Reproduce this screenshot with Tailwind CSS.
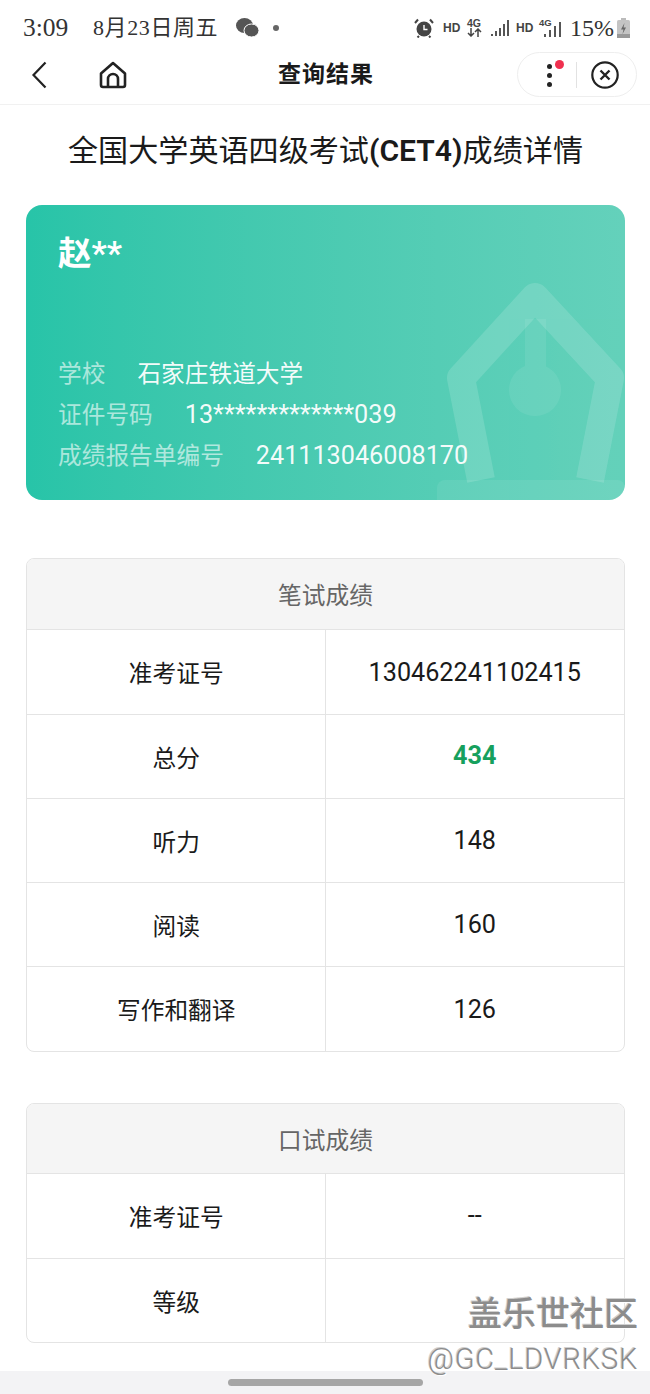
<!DOCTYPE html>
<html lang="zh-CN">
<head>
    <meta charset="UTF-8">
    <meta name="viewport" content="width=device-width, initial-scale=1.0">
    <title>查询结果</title>
    <script src="https://cdn.jsdelivr.net/npm/@tailwindcss/browser@4"></script>
</head>
<body class="bg-white text-[#1a1a1a] font-['Roboto','Noto_Sans_CJK_SC',sans-serif]">
<div class="relative w-[650px] h-[1394px] overflow-hidden flex flex-col">

    <!-- status bar -->
    <div class="h-[52px] shrink-0 flex items-center pl-[23px] pt-[3px] text-[#333] font-['Liberation_Serif','Noto_Sans_CJK_SC',serif]">
        <span class="w-[70px] text-[25.5px] leading-none">3:09</span>
        <span class="w-[143px] text-[22px] leading-none whitespace-nowrap tracking-[0.6px]">8月23日周五</span>
        <svg class="w-[23px] h-[20px]" viewBox="0 0 23 20" fill="#555">
            <ellipse cx="8.5" cy="7.5" rx="8.5" ry="7.5"/>
            <ellipse cx="15.5" cy="12.5" rx="7.5" ry="6.5" stroke="#fff" stroke-width="1"/>
        </svg>
        <span class="ml-[14px] w-[6px] h-[6px] rounded-full bg-[#666]"></span>
        <svg class="ml-[135px] w-[20px] h-[20px]" viewBox="0 0 20 20">
            <circle cx="10" cy="11" r="7.5" fill="#444"/>
            <path d="M10 7v4.5h3.5" stroke="#fff" stroke-width="1.4" fill="none"/>
            <path d="M1 5l3-3.5M19 5l-3-3.5M5 18l-1.5 1.5M15 18l1.5 1.5" stroke="#444" stroke-width="2"/>
        </svg>
        <span class="ml-[9px] w-[24px] text-[12px] font-bold font-['Liberation_Sans'] text-[#444]">HD</span>
        <div class="w-[24px] flex flex-col items-start leading-none font-['Liberation_Sans'] text-[#444] font-bold text-[10.5px]">
            <span>4G</span>
            <svg class="w-[15px] h-[9px]" viewBox="0 0 15 9" fill="none" stroke="#444" stroke-width="1.5">
                <path d="M4 0v8M1 5l3 3 3-3M11 9V1M8 4l3-3 3 3"/>
            </svg>
        </div>
        <svg class="w-[18px] h-[16px]" viewBox="0 0 18 16" fill="#555">
            <rect x="0" y="14" width="2" height="2"/><rect x="4" y="11" width="2" height="5"/><rect x="8" y="8" width="2" height="8"/><rect x="12" y="4" width="2" height="12"/><rect x="16" y="0" width="2" height="16"/>
        </svg>
        <span class="ml-[7px] w-[23px] text-[12px] font-bold font-['Liberation_Sans'] text-[#444]">HD</span>
        <div class="relative w-[24px] h-[20px]">
            <span class="absolute left-0 top-0 text-[9.5px] leading-none font-bold font-['Liberation_Sans'] text-[#444]">4G</span>
            <svg class="absolute left-[5px] top-[3px] w-[18px] h-[16px]" viewBox="0 0 18 16" fill="#555">
                <rect x="0" y="13" width="2" height="3"/><rect x="5" y="9" width="2" height="7"/><rect x="10" y="5" width="2" height="11"/><rect x="15" y="1" width="2" height="15"/>
            </svg>
        </div>
        <span class="ml-[7px] w-[47px] text-[24px] leading-none whitespace-nowrap">15%</span>
        <svg class="w-[13px] h-[20px]" viewBox="0 0 13 20">
            <rect x="4" y="0" width="5" height="2" fill="#bbb"/>
            <rect x="0" y="2" width="13" height="18" rx="1.5" fill="#c4c4c4"/>
            <rect x="0" y="16" width="13" height="4" fill="#999"/>
            <path d="M7.5 5L4 11.5h2.5L5.5 16 9 9.5H6.5z" fill="#666"/>
        </svg>
    </div>

    <!-- nav bar -->
    <div class="relative h-[53px] shrink-0 border-b border-[#f1f1f1] flex items-center">
        <svg class="ml-[31px] w-[16px] h-[28px] -mt-[7px]" viewBox="0 0 16 28" fill="none" stroke="#222" stroke-width="2.2">
            <path d="M14.5 1.5L2.5 14l12 12.5"/>
        </svg>
        <svg class="ml-[52px] w-[28px] h-[28px] -mt-[7px]" viewBox="0 0 28 28" fill="none" stroke="#222" stroke-width="2.6" stroke-linejoin="round">
            <path d="M2 12.5L14 2l12 10.5V24a2 2 0 0 1-2 2H4a2 2 0 0 1-2-2z"/>
            <path d="M9 26v-8a5 5 0 0 1 10 0v8"/>
        </svg>
        <div class="absolute left-0 right-0 top-[6px] text-center text-[23px] font-bold leading-[34px] tracking-[1px] pl-[2px]">查询结果</div>
        <div class="absolute left-[517px] top-0 w-[120px] h-[45px] rounded-full border border-[#eeeeee] bg-white flex items-center">
            <div class="relative w-[58px] h-full">
                <span class="absolute left-[29px] top-[11px] w-[5px] h-[5px] rounded-full bg-[#222]"></span>
                <span class="absolute left-[29px] top-[20px] w-[5px] h-[5px] rounded-full bg-[#222]"></span>
                <span class="absolute left-[29px] top-[29px] w-[5px] h-[5px] rounded-full bg-[#222]"></span>
                <span class="absolute left-[37px] top-[7px] w-[9px] h-[9px] rounded-full bg-[#f0304f]"></span>
            </div>
            <span class="w-px h-[26px] bg-[#e2e2e2]"></span>
            <svg class="ml-[14px] w-[28px] h-[28px]" viewBox="0 0 28 28" fill="none" stroke="#222" stroke-width="2.2">
                <circle cx="14" cy="14" r="12.7"/>
                <path d="M9.5 9.5l9 9M18.5 9.5l-9 9" stroke-width="2.4"/>
            </svg>
        </div>
    </div>

    <h1 class="mt-[24px] text-center text-[30.1px] leading-[44px] font-normal whitespace-nowrap pl-[1px]">全国大学英语四级考试<span class="font-semibold">(CET4)</span>成绩详情</h1>

    <!-- info card -->
    <div class="relative mt-[32px] ml-[26px] w-[599px] h-[295px] rounded-[16px] overflow-hidden bg-linear-to-r from-[#27c4a8] to-[#64d1bb] text-white">
        <svg class="absolute inset-0 w-full h-full" viewBox="26 205 599 295" fill="none">
            <g opacity="0.14">
                <path d="M481 480L461 378L535 297L610 378L590 480" stroke="#fff" stroke-width="28" stroke-linejoin="round"/>
            </g>
            <g opacity="0.07" fill="#fff">
                <rect x="525" y="319" width="21" height="49"/>
                <circle cx="535" cy="390" r="26"/>
                <rect x="437" y="480" width="188" height="30" rx="8"/>
            </g>
        </svg>
        <div class="relative pl-[32px] pt-[27px]">
            <div class="text-[33.5px] leading-[44px] font-bold">赵**</div>
            <div class="mt-[80px] flex flex-col gap-[5px] text-[23.7px] leading-[36px] text-white/95">
                <div class="flex whitespace-nowrap"><span class="text-white/60 mr-[32px]">学校</span><span>石家庄铁道大学</span></div>
                <div class="flex whitespace-nowrap"><span class="text-white/60 mr-[32px]">证件号码</span><span class="text-[25.2px]">13*************039</span></div>
                <div class="flex whitespace-nowrap"><span class="text-white/60 mr-[32px]">成绩报告单编号</span><span class="text-[25.2px]">241113046008170</span></div>
            </div>
        </div>
    </div>

    <!-- written scores -->
    <div class="mt-[58px] ml-[26px] w-[599px] rounded-[8px] border border-[#e4e4e4] overflow-hidden text-[23.7px]">
        <div class="h-[71px] pt-[6px] bg-[#f5f5f5] flex items-center justify-center text-[#666] border-b border-[#e4e4e4]">笔试成绩</div>
        <div class="grid grid-cols-2 h-[85px] border-b border-[#e4e4e4]">
            <div class="flex items-center justify-center pt-[6px] pl-[1px] border-r border-[#e4e4e4]">准考证号</div>
            <div class="flex items-center justify-center pt-[1px] text-[25.2px]">130462241102415</div>
        </div>
        <div class="grid grid-cols-2 h-[84px] border-b border-[#e4e4e4]">
            <div class="flex items-center justify-center pt-[6px] pl-[1px] border-r border-[#e4e4e4]">总分</div>
            <div class="flex items-center justify-center pb-[2px] text-[25.2px] font-bold text-[#16a05d]">434</div>
        </div>
        <div class="grid grid-cols-2 h-[84px] border-b border-[#e4e4e4]">
            <div class="flex items-center justify-center pt-[6px] pl-[1px] border-r border-[#e4e4e4]">听力</div>
            <div class="flex items-center justify-center text-[25.2px]">148</div>
        </div>
        <div class="grid grid-cols-2 h-[84px] border-b border-[#e4e4e4]">
            <div class="flex items-center justify-center pt-[6px] pl-[1px] border-r border-[#e4e4e4]">阅读</div>
            <div class="flex items-center justify-center text-[25.2px]">160</div>
        </div>
        <div class="grid grid-cols-2 h-[84px]">
            <div class="flex items-center justify-center pt-[6px] pl-[1px] border-r border-[#e4e4e4]">写作和翻译</div>
            <div class="flex items-center justify-center pt-[1px] text-[25.2px]">126</div>
        </div>
    </div>

    <!-- oral scores -->
    <div class="mt-[51px] ml-[26px] w-[599px] rounded-[8px] border border-[#e4e4e4] overflow-hidden text-[23.7px]">
        <div class="h-[70px] pt-[6px] bg-[#f5f5f5] flex items-center justify-center text-[#666] border-b border-[#e4e4e4]">口试成绩</div>
        <div class="grid grid-cols-2 h-[85px] border-b border-[#e4e4e4]">
            <div class="flex items-center justify-center pt-[6px] pl-[1px] border-r border-[#e4e4e4]">准考证号</div>
            <div class="flex items-center justify-center text-[25.2px]">--</div>
        </div>
        <div class="grid grid-cols-2 h-[83px]">
            <div class="flex items-center justify-center pt-[6px] pl-[1px] border-r border-[#e4e4e4]">等级</div>
            <div class="flex items-center justify-center text-[25.2px]"></div>
        </div>
    </div>

    <!-- gesture bar -->
    <div class="absolute left-0 right-0 bottom-0 h-[23px] bg-[#f3f3f5] flex items-center justify-center">
        <span class="w-[195px] h-[7px] rounded-full bg-[#a6a6a6]"></span>
    </div>

    <!-- watermark -->
    <div class="absolute right-[12px] top-[1292px] text-right text-[#8c8c8c] [text-shadow:1px_1px_0_#fff,-1px_-1px_0_#d0d0d0] whitespace-nowrap">
        <div class="text-[34px] leading-[44px] font-medium">盖乐世社区</div>
        <div class="text-[29px] leading-[32px] mt-[7px] tracking-[0.8px] font-light">@GC_LDVRKSK</div>
    </div>
</div>
</body>
</html>
